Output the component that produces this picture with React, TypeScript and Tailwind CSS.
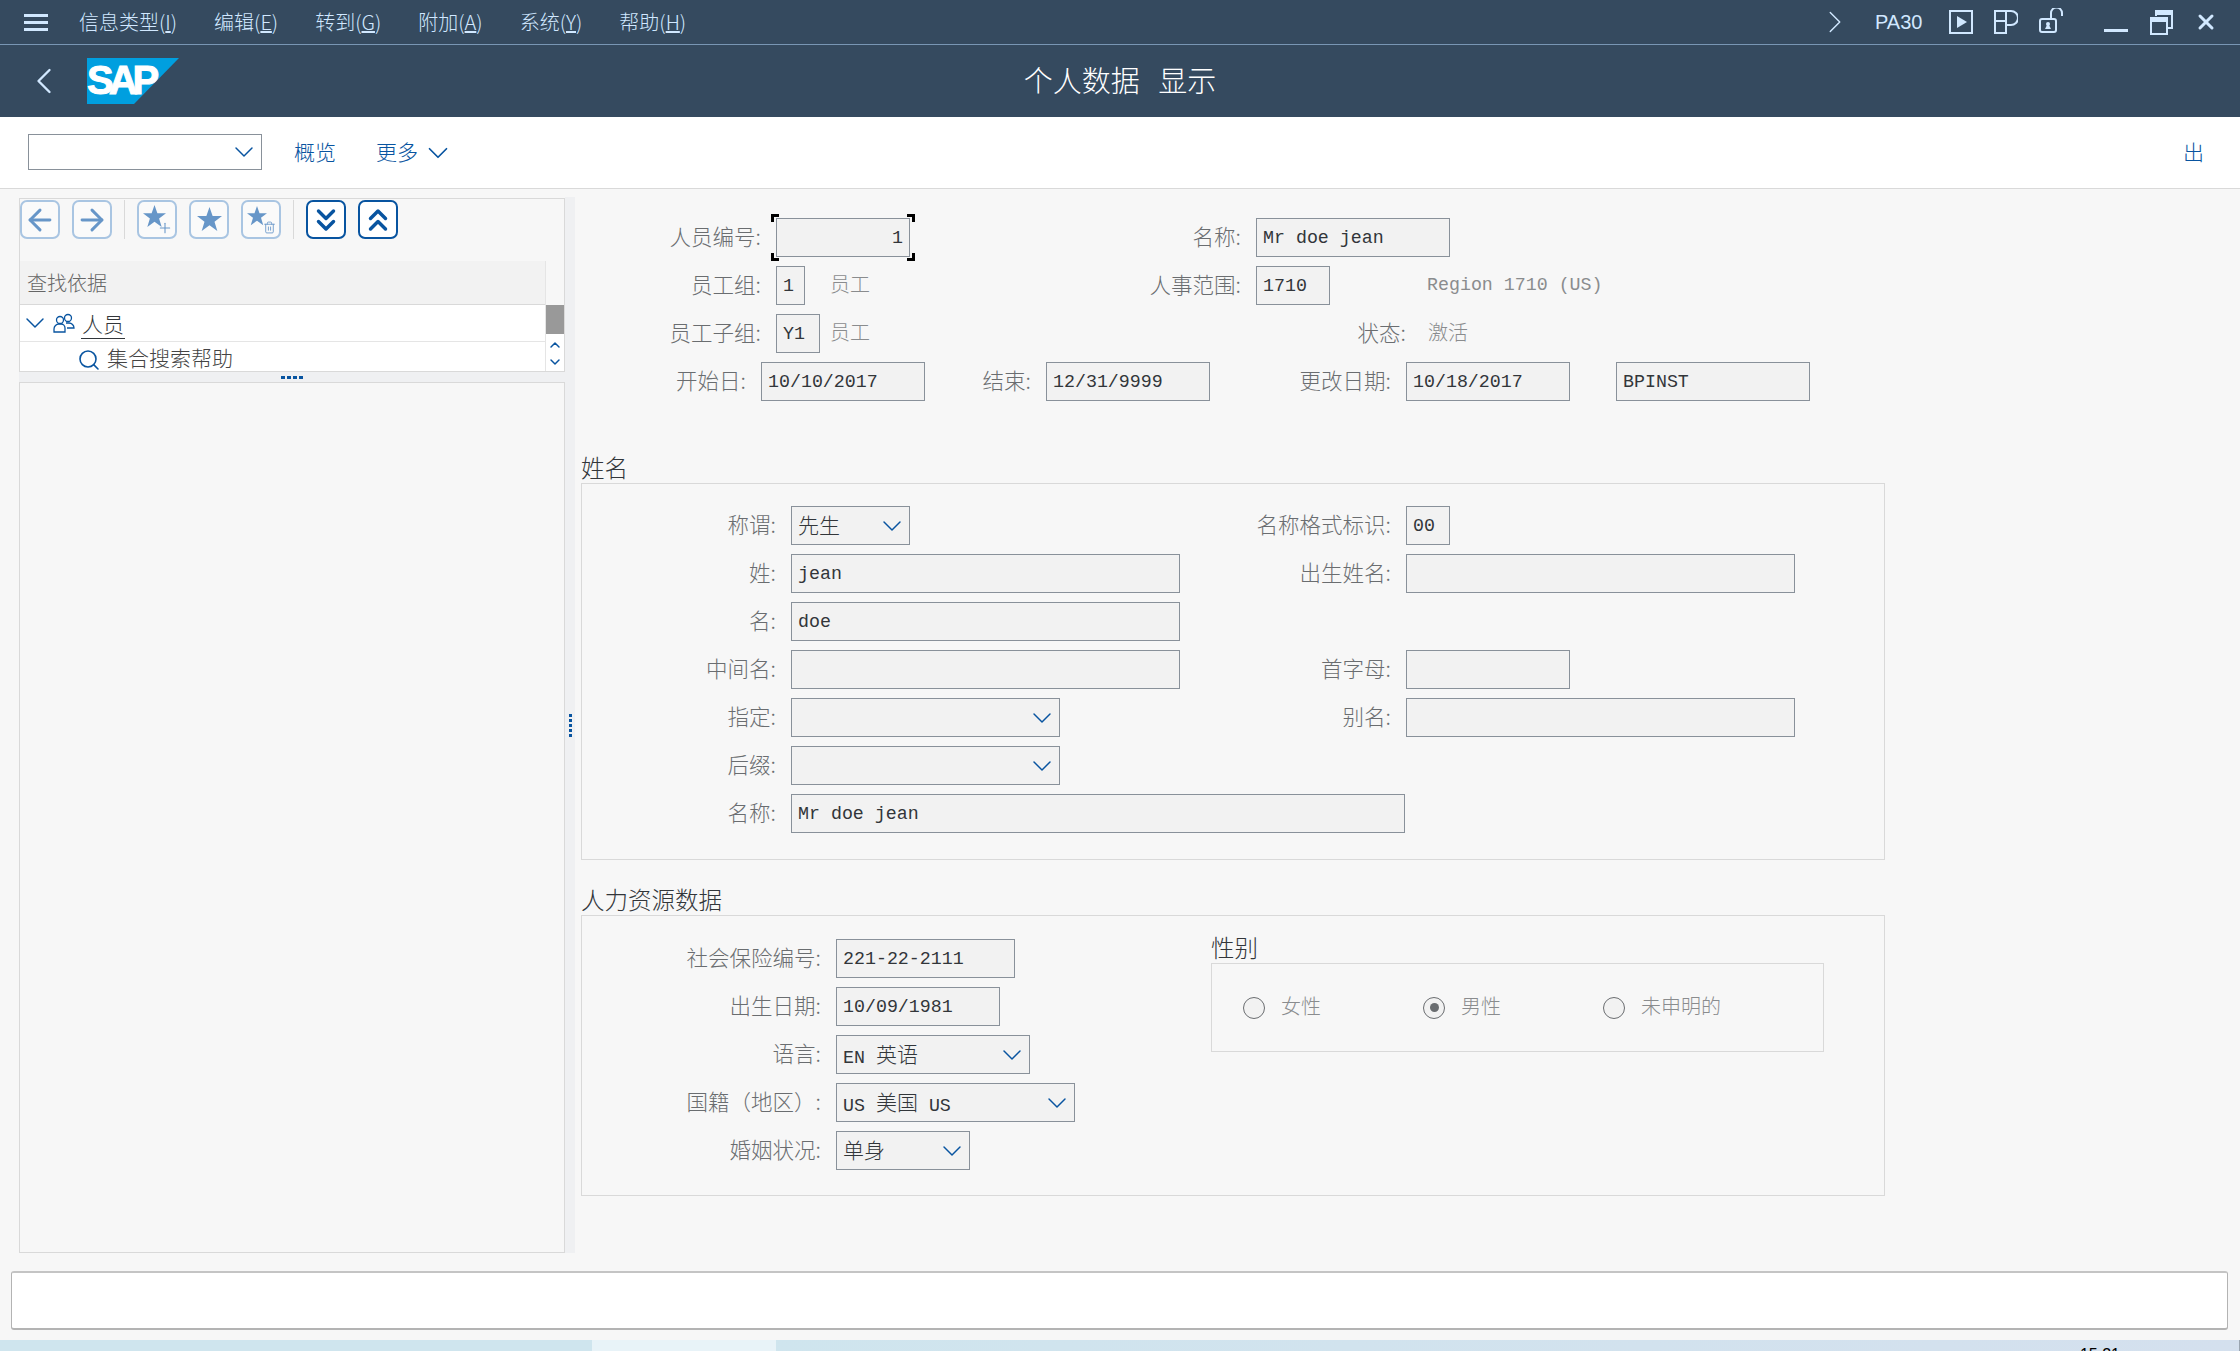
import { ReactNode } from "react";
import { ArrowLeft, ArrowRight, ChevronDown, ChevronLeft, ChevronRight, ChevronUp, ChevronsDown, ChevronsUp, Plus, Search, Trash2, X } from "lucide-react";

const CJK = "font-['Noto_Sans_CJK_SC',sans-serif]";
const MONO = "font-['Liberation_Mono','Noto_Sans_CJK_SC',monospace]";

function Lbl({ className, children }: { className: string; children: ReactNode }) {
  return <div className={`${className} ${CJK} shrink-0 text-right text-[21.5px] font-light text-[#6a6d70] pr-[15px] pb-[3px] whitespace-nowrap`}>{children}</div>;
}

function Field({ className, children, right, select }: { className: string; children?: ReactNode; right?: boolean; select?: boolean }) {
  return (
    <div className={`${className} ${MONO} shrink-0 h-[39px] border border-[#89919a] bg-[#f2f2f2] flex items-center px-[6px] text-[18.3px] text-[#32363a] whitespace-nowrap ${right ? "justify-end" : "justify-between"}`}>
      <span className="pt-[2px]">{children}</span>
      {select && <ChevronDown className="w-[32px] h-[32px] text-[#0854a0] -mr-[5px] shrink-0" strokeWidth={1.1} />}
    </div>
  );
}

function Zh({ children }: { children: ReactNode }) {
  return <span className={`${CJK} text-[21px] font-light relative -top-[1px]`}>{children}</span>;
}

function Row({ children }: { children: ReactNode }) {
  return <div className="flex items-center h-[39px] mb-[9px]">{children}</div>;
}

function Title({ className, children }: { className: string; children: ReactNode }) {
  return <div className={`${className} ${CJK} h-[30px] leading-[28px] text-[23.5px] font-light text-[#32363a]`}>{children}</div>;
}

function ToolBtn({ children, strong }: { children: ReactNode; strong?: boolean }) {
  return (
    <div className={`relative w-[40px] h-[39px] rounded-[7px] border-2 flex items-center justify-center shrink-0 ${strong ? "border-[#0854a0] bg-white text-[#0854a0]" : "border-[#a9c5e2] bg-[#fafafa] text-[#6796c8]"}`}>
      {children}
    </div>
  );
}

function StarIcon({ size, className }: { size: number; className?: string }) {
  return (
    <svg className={className} width={size} height={size} viewBox="0 0 24 24" fill="currentColor">
      <path d="M12 0l3 8.6h9l-7.2 5.5 2.7 8.9-7.5-5.4L4.500 23l2.700-8.900L0 8.600h9z" />
    </svg>
  );
}

function Radio({ label, checked, className }: { label: string; checked?: boolean; className: string }) {
  return (
    <div className={`${className} flex items-center gap-[16px]`}>
      <div className="w-[22px] h-[22px] rounded-full border border-[#6a6d70] bg-[#f2f2f2] flex items-center justify-center shrink-0">
        {checked && <div className="w-[9px] h-[9px] rounded-full bg-[#6a6d70]" />}
      </div>
      <span className={`${CJK} text-[20px] font-light text-[#8a8c8e] pb-[3px]`}>{label}</span>
    </div>
  );
}

function MenuItem({ zh, k }: { zh: string; k: string }) {
  return (
    <span className={`${CJK} text-[20px] text-[#d1e8ff] font-light whitespace-nowrap`}>
      {zh}(<span className="underline">{k}</span>)
    </span>
  );
}

function Corner({ className }: { className: string }) {
  return <span className={`absolute w-[8px] h-[8px] border-black ${className}`} />;
}

export default function App() {
  return (
    <div className="w-[2240px] h-[1351px] overflow-hidden flex flex-col bg-[#f7f7f7]">
      {/* menu bar */}
      <div className="h-[45px] shrink-0 bg-[#354a5f] border-b border-[#7996b4] flex items-center text-[#d1e8ff]">
        <div className="ml-[24px] w-[24px] flex flex-col gap-[4px]">
          <span className="h-[3px] bg-[#d1e8ff]" />
          <span className="h-[3px] bg-[#d1e8ff]" />
          <span className="h-[3px] bg-[#d1e8ff]" />
        </div>
        <div className="ml-[31px] flex gap-[37px]">
          <MenuItem zh="信息类型" k="I" />
          <MenuItem zh="编辑" k="E" />
          <MenuItem zh="转到" k="G" />
          <MenuItem zh="附加" k="A" />
          <MenuItem zh="系统" k="Y" />
          <MenuItem zh="帮助" k="H" />
        </div>
        <div className="ml-auto flex items-center">
          <ChevronRight className="w-[38px] h-[38px] shrink-0" strokeWidth={0.9} />
          <span className="ml-[21px] w-[46px] text-[20px] font-['Liberation_Sans',sans-serif]">PA30</span>
          <svg className="ml-[28px]" width="24" height="24" viewBox="0 0 24 24" fill="none" stroke="#d1e8ff" strokeWidth="2">
            <rect x="1" y="1" width="22" height="22" />
            <path d="M8 6l10 6-10 6z" fill="#d1e8ff" stroke="none" />
          </svg>
          <svg className="ml-[21px]" width="24" height="24" viewBox="0 0 24 24" fill="none" stroke="#d1e8ff" strokeWidth="2">
            <path d="M1 1h16a6 6 0 0 1 0 14h-5v8H1zM12 1v10H1M12 11v4" />
          </svg>
          <svg className="ml-[21px] -mt-[3px]" width="25" height="26" viewBox="0 0 25 26" fill="none" stroke="#d1e8ff" strokeWidth="2">
            <rect x="1" y="11" width="16" height="13" rx="2" />
            <path d="M12 11V5a5 5 0 0 1 11 0v3" />
            <circle cx="9" cy="16" r="2" fill="#d1e8ff" stroke="none" />
            <path d="M6 21h6l-2-4H8z" fill="#d1e8ff" stroke="none" />
          </svg>
          <span className="ml-[40px] mt-[16px] w-[24px] h-[3px] bg-[#d1e8ff]" />
          <svg className="ml-[22px]" width="23" height="25" viewBox="0 0 23 25" fill="none" stroke="#d1e8ff" strokeWidth="2">
            <path d="M6 6V1h16v17h-5" />
            <path d="M6 1h16v4H6z" fill="#d1e8ff" stroke="none" />
            <rect x="1" y="8" width="16" height="16" />
            <path d="M1 8h16v4H1z" fill="#d1e8ff" stroke="none" />
          </svg>
          <X className="ml-[21px] mr-[22px] w-[24px] h-[24px]" strokeWidth={3} />
        </div>
      </div>

      {/* title bar */}
      <div className="h-[72px] shrink-0 bg-[#354a5f] relative flex items-center">
        <ChevronLeft className="ml-[22px] w-[44px] h-[44px] text-[#d1e8ff] shrink-0" strokeWidth={1.3} />
        <svg className="ml-[21px] -mt-[1px]" width="92" height="46" viewBox="0 0 92 46">
          <path d="M0 0h92L47 46H0z" fill="#009fdf" />
          <text x="0" y="36" fontFamily="Liberation Sans" fontWeight="700" fontSize="40" letterSpacing="-5" fill="#fff" stroke="#fff" strokeWidth="1">SAP</text>
        </svg>
        <div className={`absolute inset-x-0 text-center ${CJK} text-[29px] font-light text-white [word-spacing:12px] pb-[2px]`}>个人数据 显示</div>
      </div>

      {/* action bar */}
      <div className="h-[72px] shrink-0 bg-white border-b border-[#d9d9d9] flex items-center text-[#0854a0]">
        <div className="ml-[28px] w-[234px] h-[36px] -mt-[2px] border border-[#89919a] flex items-center justify-end pr-[1px]">
          <ChevronDown className="w-[32px] h-[32px] shrink-0" strokeWidth={1.1} />
        </div>
        <span className={`ml-[32px] ${CJK} text-[21px] font-light pb-[2px]`}>概览</span>
        <span className={`ml-[40px] ${CJK} text-[21px] font-light pb-[2px]`}>更多</span>
        <ChevronDown className="ml-[3px] w-[34px] h-[34px] shrink-0" strokeWidth={1.2} />
        <span className={`ml-auto mr-[36px] ${CJK} text-[21px] font-light pb-[2px]`}>出</span>
      </div>

      {/* main */}
      <div className="flex h-[1065px] shrink-0 pl-[19px] pt-[9px]">
        {/* left pane */}
        <div className="w-[546px] shrink-0 flex flex-col">
          <div className="border-t border-l border-r border-[#d9d9d9] h-[63px] flex pt-[1px] items-start gap-[12px]">
            <ToolBtn><ArrowLeft className="w-[34px] h-[34px] shrink-0" strokeWidth={2.1} /></ToolBtn>
            <ToolBtn><ArrowRight className="w-[34px] h-[34px] shrink-0" strokeWidth={2.1} /></ToolBtn>
            <div className="w-px h-[39px] bg-[#d9d9d9]" />
            <ToolBtn>
              <StarIcon size={23} className="-mt-[6px] -ml-[6px]" />
              <Plus className="absolute right-[2px] bottom-[1px] w-[16px] h-[16px]" strokeWidth={1.6} />
            </ToolBtn>
            <ToolBtn><StarIcon size={25} /></ToolBtn>
            <ToolBtn>
              <StarIcon size={20} className="-mt-[8px] -ml-[8px]" />
              <Trash2 className="absolute right-[3px] bottom-[3px] w-[13px] h-[13px]" strokeWidth={1.6} />
            </ToolBtn>
            <div className="w-px h-[39px] bg-[#d9d9d9]" />
            <ToolBtn strong><ChevronsDown className="w-[36px] h-[36px] shrink-0" strokeWidth={2.3} /></ToolBtn>
            <ToolBtn strong><ChevronsUp className="w-[36px] h-[36px] shrink-0" strokeWidth={2.3} /></ToolBtn>
          </div>
          <div className="flex border-l border-r border-b border-[#d9d9d9] h-[111px]">
            <div className="flex-1 flex flex-col min-w-0">
              <div className={`h-[44px] bg-[#f2f2f2] border-b border-[#d9d9d9] flex items-center pl-[7px] ${CJK} text-[20px] font-light text-[#666]`}>查找依据</div>
              <div className="h-[37px] bg-white border-b border-[#e5e5e5] flex items-center">
                <ChevronDown className="-ml-[1px] w-[32px] h-[32px] text-[#0854a0] shrink-0" strokeWidth={1.1} />
                <svg className="ml-[2px]" width="22" height="20" viewBox="0 0 22 20" fill="none" stroke="#0854a0" strokeWidth="1.3">
                  <circle cx="7" cy="7" r="3.5" />
                  <circle cx="15" cy="5" r="3.5" />
                  <path d="M1 19v-3a5 5 0 0 1 5-5h2a4 4 0 0 1 4 4v4zM13 10h3a5 5 0 0 1 5 5h-7" />
                </svg>
                <span className={`ml-[6px] ${CJK} text-[21px] font-light text-[#32363a] border-b border-[#32363a] px-[1px] leading-[30px]`}>人员</span>
              </div>
              <div className="h-[29px] bg-white flex items-start pl-[57px] overflow-hidden">
                <Search className="mt-[6px] w-[24px] h-[24px] text-[#0854a0] shrink-0" strokeWidth={1.6} />
                <span className={`ml-[6px] mt-[2px] ${CJK} text-[21px] font-light text-[#444] leading-[27px]`}>集合搜索帮助</span>
              </div>
            </div>
            <div className="w-[19px] shrink-0 border-l border-[#e5e5e5] bg-white flex flex-col items-center">
              <div className="w-full h-[44px] bg-[#f7f7f7] shrink-0" />
              <div className="w-full h-[29px] bg-[#999] shrink-0" />
              <ChevronUp className="w-[16px] h-[16px] text-[#0854a0] mt-[3px]" strokeWidth={2.2} />
              <ChevronDown className="w-[16px] h-[16px] text-[#0854a0] mt-[1px]" strokeWidth={2.2} />
            </div>
          </div>
          <div className="h-[10px] bg-[#eff0f2] flex items-center justify-center gap-[2px] shrink-0">
            <span className="w-[4px] h-[3px] bg-[#0854a0]" />
            <span className="w-[4px] h-[3px] bg-[#0854a0]" />
            <span className="w-[4px] h-[3px] bg-[#0854a0]" />
            <span className="w-[4px] h-[3px] bg-[#0854a0]" />
          </div>
          <div className="h-[871px] border border-[#d9d9d9] bg-[#f7f7f7] shrink-0" />
        </div>

        {/* splitter */}
        <div className="w-[10px] h-[1056px] shrink-0 bg-[#eff0f2] flex flex-col items-center justify-center gap-[2px] -mt-[1px]">
          <span className="w-[3px] h-[3px] bg-[#0854a0]" />
          <span className="w-[3px] h-[3px] bg-[#0854a0]" />
          <span className="w-[3px] h-[3px] bg-[#0854a0]" />
          <span className="w-[3px] h-[3px] bg-[#0854a0]" />
          <span className="w-[3px] h-[3px] bg-[#0854a0]" />
        </div>

        {/* form */}
        <div className="flex-1 pt-[20px] min-w-0">
          <Row>
            <Lbl className="w-[201px]">人员编号:</Lbl>
            <div className="relative">
              <Field className="w-[134px]" right>1</Field>
              <Corner className="-left-[5px] -top-[4px] border-l-[3px] border-t-[3px]" />
              <Corner className="-right-[5px] -top-[4px] border-r-[3px] border-t-[3px]" />
              <Corner className="-left-[5px] -bottom-[4px] border-l-[3px] border-b-[3px]" />
              <Corner className="-right-[5px] -bottom-[4px] border-r-[3px] border-b-[3px]" />
            </div>
            <Lbl className="w-[346px]">名称:</Lbl>
            <Field className="w-[194px]">Mr doe jean</Field>
          </Row>
          <Row>
            <Lbl className="w-[201px]">员工组:</Lbl>
            <Field className="w-[29px]">1</Field>
            <span className={`ml-[25px] w-[206px] shrink-0 ${CJK} text-[20px] font-light text-[#8a8c8e] pb-[3px]`}>员工</span>
            <Lbl className="w-[220px]">人事范围:</Lbl>
            <Field className="w-[74px]">1710</Field>
            <span className={`ml-[97px] ${MONO} text-[18.3px] text-[#8a8c8e]`}>Region 1710 (US)</span>
          </Row>
          <Row>
            <Lbl className="w-[201px]">员工子组:</Lbl>
            <Field className="w-[44px]">Y1</Field>
            <span className={`ml-[10px] w-[206px] shrink-0 ${CJK} text-[20px] font-light text-[#8a8c8e] pb-[3px]`}>员工</span>
            <Lbl className="w-[385px]">状态:</Lbl>
            <span className={`ml-[7px] ${CJK} text-[20px] font-light text-[#8a8c8e] pb-[3px]`}>激活</span>
          </Row>
          <Row>
            <Lbl className="w-[186px]">开始日:</Lbl>
            <Field className="w-[164px]">10/10/2017</Field>
            <Lbl className="w-[121px]">结束:</Lbl>
            <Field className="w-[164px]">12/31/9999</Field>
            <Lbl className="w-[196px]">更改日期:</Lbl>
            <Field className="w-[164px]">10/18/2017</Field>
            <div className="w-[46px] shrink-0" />
            <Field className="w-[194px]">BPINST</Field>
          </Row>

          <Title className="mt-[52px] ml-[6px]">姓名</Title>
          <div className="ml-[6px] w-[1304px] h-[377px] border border-[#d9d9d9] pt-[22px]">
            <Row>
              <Lbl className="w-[209px]">称谓:</Lbl>
              <Field className="w-[119px]" select><Zh>先生</Zh></Field>
              <Lbl className="w-[496px]">名称格式标识:</Lbl>
              <Field className="w-[44px]">00</Field>
            </Row>
            <Row>
              <Lbl className="w-[209px]">姓:</Lbl>
              <Field className="w-[389px]">jean</Field>
              <Lbl className="w-[226px]">出生姓名:</Lbl>
              <Field className="w-[389px]" />
            </Row>
            <Row>
              <Lbl className="w-[209px]">名:</Lbl>
              <Field className="w-[389px]">doe</Field>
            </Row>
            <Row>
              <Lbl className="w-[209px]">中间名:</Lbl>
              <Field className="w-[389px]" />
              <Lbl className="w-[226px]">首字母:</Lbl>
              <Field className="w-[164px]" />
            </Row>
            <Row>
              <Lbl className="w-[209px]">指定:</Lbl>
              <Field className="w-[269px]" select />
              <Lbl className="w-[346px]">别名:</Lbl>
              <Field className="w-[389px]" />
            </Row>
            <Row>
              <Lbl className="w-[209px]">后缀:</Lbl>
              <Field className="w-[269px]" select />
            </Row>
            <Row>
              <Lbl className="w-[209px]">名称:</Lbl>
              <Field className="w-[614px]">Mr doe jean</Field>
            </Row>
          </div>

          <Title className="mt-[25px] ml-[6px]">人力资源数据</Title>
          <div className="ml-[6px] w-[1304px] h-[281px] border border-[#d9d9d9] flex">
            <div className="w-[629px] shrink-0 pt-[23px]">
              <Row>
                <Lbl className="w-[254px]">社会保险编号:</Lbl>
                <Field className="w-[179px]">221-22-2111</Field>
              </Row>
              <Row>
                <Lbl className="w-[254px]">出生日期:</Lbl>
                <Field className="w-[164px]">10/09/1981</Field>
              </Row>
              <Row>
                <Lbl className="w-[254px]">语言:</Lbl>
                <Field className="w-[194px]" select>EN <Zh>英语</Zh></Field>
              </Row>
              <Row>
                <Lbl className="w-[254px]">{"国籍\uFF08地区\uFF09:"}</Lbl>
                <Field className="w-[239px]" select>US <Zh>美国</Zh> US</Field>
              </Row>
              <Row>
                <Lbl className="w-[254px]">婚姻状况:</Lbl>
                <Field className="w-[134px]" select><Zh>单身</Zh></Field>
              </Row>
            </div>
            <div className="pt-[17px]">
              <Title className="">性别</Title>
              <div className="w-[613px] h-[89px] border border-[#d9d9d9] flex items-center pl-[31px]">
                <Radio label="女性" className="w-[180px]" />
                <Radio label="男性" className="w-[180px]" checked />
                <Radio label="未申明的" className="w-[180px]" />
              </div>
            </div>
          </div>
        </div>
      </div>

      {/* message area */}
      <div className="ml-[11px] w-[2217px] h-[59px] mt-[17px] shrink-0 bg-white border border-[#b3b3b3] border-t-2 border-b-2 border-t-[#c4c4c4] rounded-[3px]" />

      {/* status strip */}
      <div className="mt-[10px] h-[11px] shrink-0 flex overflow-hidden">
        <div className="w-[592px] bg-[#cfe5ee]" />
        <div className="w-[184px] bg-[#e8f3f8]" />
        <div className="flex-1 bg-gradient-to-r from-[#cfe5ee] to-[#d4e0ee] flex justify-end border-r border-[#9aa5b0]">
          <span className="mr-[119px] mt-[7px] text-[16px] leading-[16px] text-black font-['Liberation_Sans',sans-serif]">15:21</span>
        </div>
      </div>
    </div>
  );
}
